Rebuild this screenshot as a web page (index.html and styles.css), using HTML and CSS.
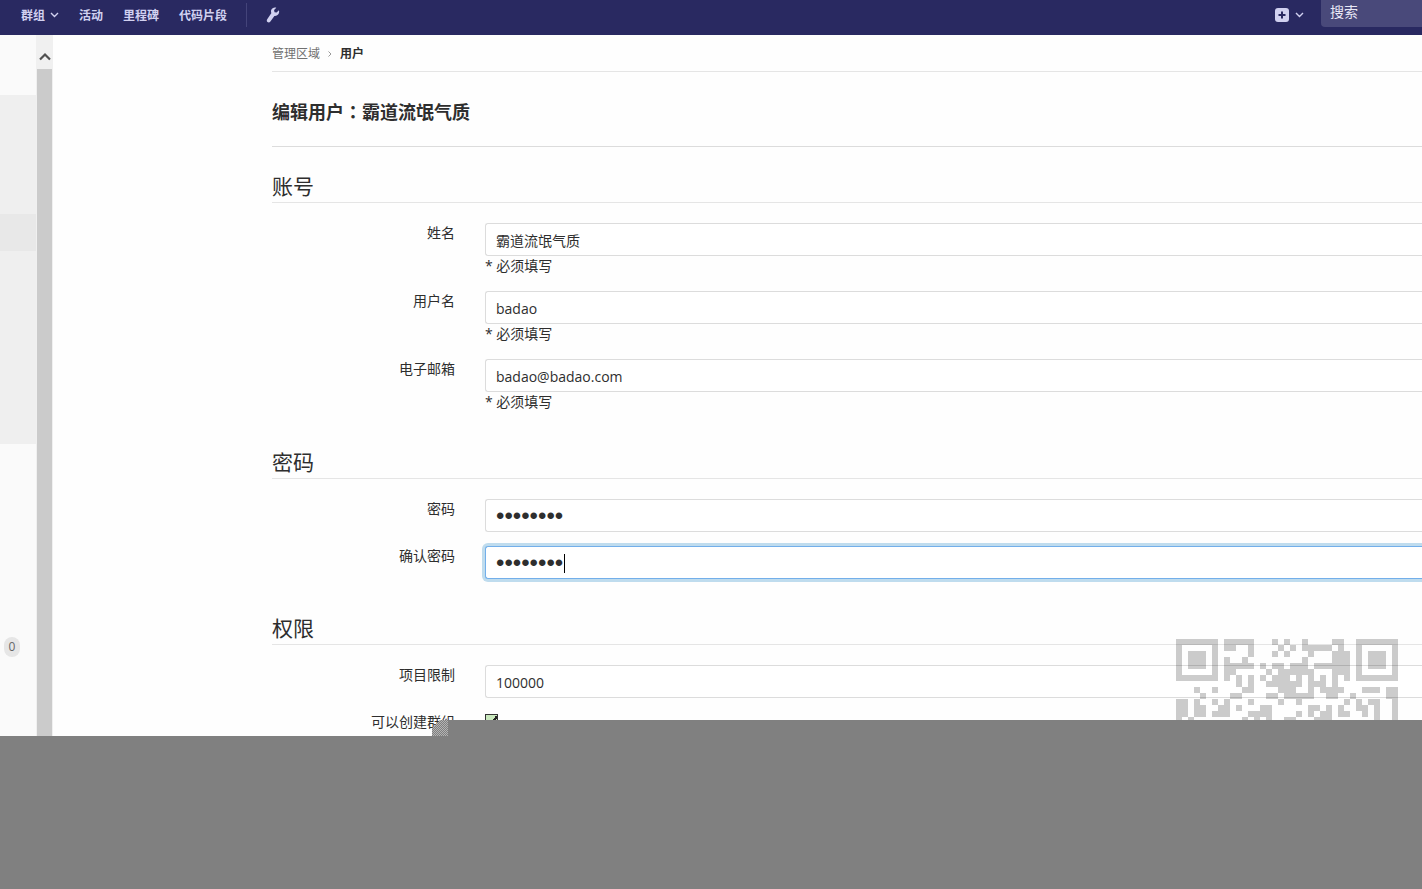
FILE: index.html
```html
<!DOCTYPE html>
<html lang="zh-CN">
<head>
<meta charset="utf-8">
<title>编辑用户</title>
<link rel="stylesheet" href="styles.css">
</head>
<body class="screen">
<div class="app">
  <header class="navbar">
    <nav class="nav">
      <button type="button" class="nav-link">群组
        <svg class="chevron" viewBox="0 0 9 6"><path d="M1 1l3.5 3.5L8 1"/></svg>
      </button>
      <a class="nav-link" href="#">活动</a>
      <a class="nav-link" href="#">里程碑</a>
      <a class="nav-link" href="#">代码片段</a>
      <span class="nav-divider"></span>
      <a class="nav-link" href="#" aria-label="管理区域">
        <svg class="wrench" viewBox="0 0 14 16"><path d="M12.900 3.300l-2.300 2.300-2.100-.4-.4-2.100L10.300.7C8.300 0 5.900.9 5.200 3c-.4 1.100-.2 2.200.2 3.100L1.200 12.200c-.7 1-.5 2.200.3 2.900.9.700 2.200.5 2.900-.5l4-5.700c1.800.2 3.600-.7 4.400-2.400.5-1.100.5-2.200.1-3.200z"/></svg>
      </a>
    </nav>
    <div class="nav nav-end">
      <button type="button" class="nav-link new-menu" aria-label="新建">
        <svg class="plus" viewBox="0 0 14 14"><rect width="14" height="14" rx="3"/><path d="M7 3.500v7M3.500 7h7"/></svg>
        <svg class="chevron" viewBox="0 0 9 6"><path d="M1 1l3.500 3.500L8 1"/></svg>
      </button>
      <input class="search" type="search" placeholder="搜索" aria-label="搜索">
    </div>
  </header>

  <div class="body">
    <aside class="sidebar">
      <div class="menu-group"><div class="menu-active"></div></div>
      <span class="badge">0</span>
    </aside>
    <div class="scrollbar">
      <svg class="scroll-up" viewBox="0 0 12 9"><path d="M1 7.500l5-5 5 5"/></svg>
      <div class="thumb"></div>
    </div>

    <main class="content">
      <nav class="breadcrumb">
        <a href="#">管理区域</a>
        <svg class="crumb-arrow" viewBox="0 0 4 6"><path d="M.5.5L3 3 .5 5.500"/></svg>
        <strong>用户</strong>
      </nav>
      <h1 class="title">编辑用户<span class="colon" lang="zh-TW">：</span>霸道流氓气质</h1>
      <form>
        <section>
          <h2 class="legend">账号</h2>
          <div class="row">
            <label for="name">姓名</label>
            <div class="field"><input class="control" id="name" type="text" value="霸道流氓气质"><span class="help">* 必须填写</span></div>
          </div>
          <div class="row">
            <label for="username">用户名</label>
            <div class="field"><input class="control" id="username" type="text" value="badao"><span class="help">* 必须填写</span></div>
          </div>
          <div class="row">
            <label for="email">电子邮箱</label>
            <div class="field"><input class="control" id="email" type="text" value="badao@badao.com"><span class="help">* 必须填写</span></div>
          </div>
        </section>
        <section>
          <h2 class="legend">密码</h2>
          <div class="row">
            <label for="password">密码</label>
            <div class="field"><input class="control secret" id="password" type="password" value="12345678"></div>
          </div>
          <div class="row">
            <label for="confirm">确认密码</label>
            <div class="field"><input class="control secret focused" id="confirm" type="password" value="12345678"><span class="caret"></span></div>
          </div>
        </section>
        <section>
          <h2 class="legend">权限</h2>
          <div class="row">
            <label for="limit">项目限制</label>
            <div class="field"><input class="control" id="limit" type="text" value="100000"></div>
          </div>
          <div class="row">
            <label for="group">可以创建群组</label>
            <div class="field"><input class="check" id="group" type="checkbox" checked></div>
          </div>
        </section>
      </form>
    </main>
  </div>

  <svg class="qr" viewBox="0 0 37 14">
    <path d="M0 .5h7m1 0h5m3 0h1m1 0h1m2 0h1m4 0h2m2 0h7
    M0 1.500h1m5 0h1m1 0h2m2 0h1m4 0h1m1 0h1m1 0h5m1 0h1m2 0h1m5 0h1
    M0 2.500h1m1 0h3m1 0h1m5 0h1m3 0h1m1 0h1m3 0h1m3 0h3m1 0h1m1 0h3m1 0h1
    M0 3.500h1m1 0h3m1 0h1m1 0h1m2 0h1m9 0h1m4 0h3m1 0h1m1 0h3m1 0h1
    M0 4.500h1m1 0h3m1 0h1m1 0h5m1 0h1m1 0h2m1 0h3m1 0h6m1 0h1m1 0h3m1 0h1
    M0 5.500h1m5 0h1m1 0h2m5 0h1m1 0h6m3 0h3m1 0h1m5 0h1
    M0 6.500h7m1 0h1m1 0h1m1 0h1m1 0h1m1 0h3m1 0h1m1 0h1m1 0h1m1 0h1m1 0h1m1 0h7
    M10 7.500h1m1 0h1m2 0h6m1 0h3m1 0h1
    M3 8.500h1m2 0h1m4 0h2m4 0h3m2 0h1m1 0h4m3 0h3m1 0h2
    M4 9.500h1m4 0h2m4 0h2m1 0h5m2 0h2m2 0h1m5 0h2
    M0 10.500h2m1 0h1m2 0h1m1 0h1m3 0h1m4 0h1m2 0h1m7 0h1m1 0h1m1 0h2m2 0h1
    M0 11.500h2m1 0h2m2 0h2m1 0h1m3 0h2m6 0h2m1 0h1m1 0h1m2 0h2m1 0h1m2 0h1
    M0 12.500h2m1 0h2m1 0h3m3 0h4m4 0h1m1 0h1m1 0h2m1 0h2m2 0h1m1 0h1m2 0h1
    M0 13.500h1m1 0h1m8 0h1m1 0h1m1 0h1m2 0h2m3 0h3m7 0h1m2 0h1"/>
  </svg>
  <div class="step"></div>
  <div class="grain"></div>
</div>
<div class="blank"></div>
</body>
</html>
```
FILE: styles.css
```css
* { box-sizing: border-box; }

.screen {
  margin: 0;
  height: 100vh;
  overflow: hidden;
  display: flex;
  flex-direction: column;
  background: #808080;
  color: #2e2e2e;
  font: 14px/20px "Open Sans", "Noto Sans CJK SC", sans-serif;
}
.app {
  position: relative;
  flex: 1;
  min-height: 0;
  overflow: hidden;
  display: flex;
  flex-direction: column;
  background: #fefefe;
}
.blank { flex: none; height: 153px; background: #808080; }

.navbar {
  flex: none;
  height: 35px;
  display: flex;
  justify-content: space-between;
  background: #292961;
  padding-left: 21px;
}
.nav { display: flex; align-items: center; gap: 20px; height: 30px; }
.nav-link {
  display: flex;
  align-items: center;
  gap: 5px;
  margin: 0;
  padding: 0;
  border: 0;
  background: none;
  color: #d1d1f0;
  font: bold 12px/20px "Noto Sans CJK SC", sans-serif;
  text-decoration: none;
}
.nav-divider { width: 1px; height: 24px; margin: 0 -1px; background: #44447a; }
.chevron { width: 9px; height: 6px; fill: none; stroke: #d1d1f0; stroke-width: 1.4; }
.wrench { width: 14px; height: 16px; fill: #d1d1f0; }
.nav-end { gap: 17px; align-items: flex-start; }
.new-menu { gap: 6px; height: 30px; }
.plus { width: 14px; height: 14px; fill: #d1d1f0; stroke: #292961; }
.plus rect { stroke: none; }
.plus path { stroke-width: 2; }
.search {
  width: 101px;
  height: 27px;
  padding: 0 9px 5px;
  border: 0;
  border-radius: 0 0 0 4px;
  background: #49497a;
  font: 14px/20px "Noto Sans CJK SC", sans-serif;
}
.search::placeholder { color: #e8e8f6; }

.body { flex: 1; min-height: 0; display: flex; }
.sidebar { flex: none; width: 36px; padding-top: 60px; background: #fafafa; }
.menu-group { height: 349px; padding-top: 119px; background: #efefef; }
.menu-active { height: 37px; background: #e8e8e8; }
.badge {
  display: block;
  width: 16px;
  margin: 193px 0 0 4px;
  border-radius: 8px;
  background: #e6e6e6;
  color: #666;
  font-size: 12px;
  text-align: center;
}
.scrollbar {
  flex: none;
  width: 17px;
  display: flex;
  flex-direction: column;
  align-items: center;
  padding: 17px 1px 0;
  background: #f0f0f0;
}
.scroll-up { flex: none; width: 12px; height: 9px; margin-bottom: 8px; fill: none; stroke: #505050; stroke-width: 2.2; }
.thumb { flex: 1; width: 100%; background: #cbcbcb; }

.content { flex: 1; min-width: 0; padding-left: 219px; }
.breadcrumb {
  display: flex;
  align-items: center;
  gap: 8px;
  height: 37px;
  padding-top: 2px;
  border-bottom: 1px solid #e5e5e5;
  font-size: 12px;
}
.breadcrumb a { color: #707070; text-decoration: none; }
.crumb-arrow { width: 4px; height: 6px; fill: none; stroke: #999; }
.title {
  margin: 0;
  padding: 28px 0 22px;
  border-bottom: 1px solid #dcdcdc;
  font-size: 18px;
  line-height: 24px;
}
.colon { font-family: "Noto Sans CJK TC", sans-serif; line-height: 1; }
.legend {
  height: 32px;
  margin: 35px 0 20px;
  border-bottom: 1px solid #e5e5e5;
  font-size: 21px;
  font-weight: 400;
  line-height: 30px;
}
section:first-child .legend { margin-top: 24px; }
.row {
  display: grid;
  grid-template-columns: 183px 1fr;
  column-gap: 30px;
  margin-bottom: 15px;
}
.row label { text-align: right; }
.field { position: relative; min-width: 0; }
.control {
  display: block;
  width: 100%;
  height: 33px;
  margin: 0 0 -1px;
  padding: 1px 10px 0;
  border: 1px solid #dcdcdc;
  border-right: 0;
  border-radius: 3px 0 0 3px;
  background: #fff;
  color: #2e2e2e;
  font: inherit;
}
.help { display: block; padding-top: 1px; }
.secret { font-family: "Liberation Sans", sans-serif; font-size: 24px; }
.focused { border-color: #73afea; box-shadow: 0 0 0 3px #bfdcee; outline: 0; }
.caret { position: absolute; left: 79px; top: 8px; width: 1px; height: 19px; background: #000; }
.check {
  display: block;
  appearance: none;
  width: 13px;
  height: 13px;
  margin: 2px 0 0;
  border: 1px solid #333;
  background: linear-gradient(135deg, #c9e8bd 50%, #222 50% 65%, #c9e8bd 65%);
}

.qr {
  position: absolute;
  right: 24px;
  bottom: 13px;
  width: 222px;
  height: 84px;
  fill: none;
  stroke: rgba(0, 0, 0, .2);
  shape-rendering: crispEdges;
}
.step { position: absolute; left: 448px; right: 0; bottom: 0; height: 16px; background: #808080; }
.grain {
  position: absolute;
  left: 432px;
  bottom: 0;
  width: 16px;
  height: 16px;
  background: repeating-conic-gradient(#808080 0 25%, #b4b4b4 0 50%) 0 0 / 2px 2px;
  clip-path: polygon(50% 0, 100% 0, 100% 100%, 0 100%, 0 50%);
}
```
